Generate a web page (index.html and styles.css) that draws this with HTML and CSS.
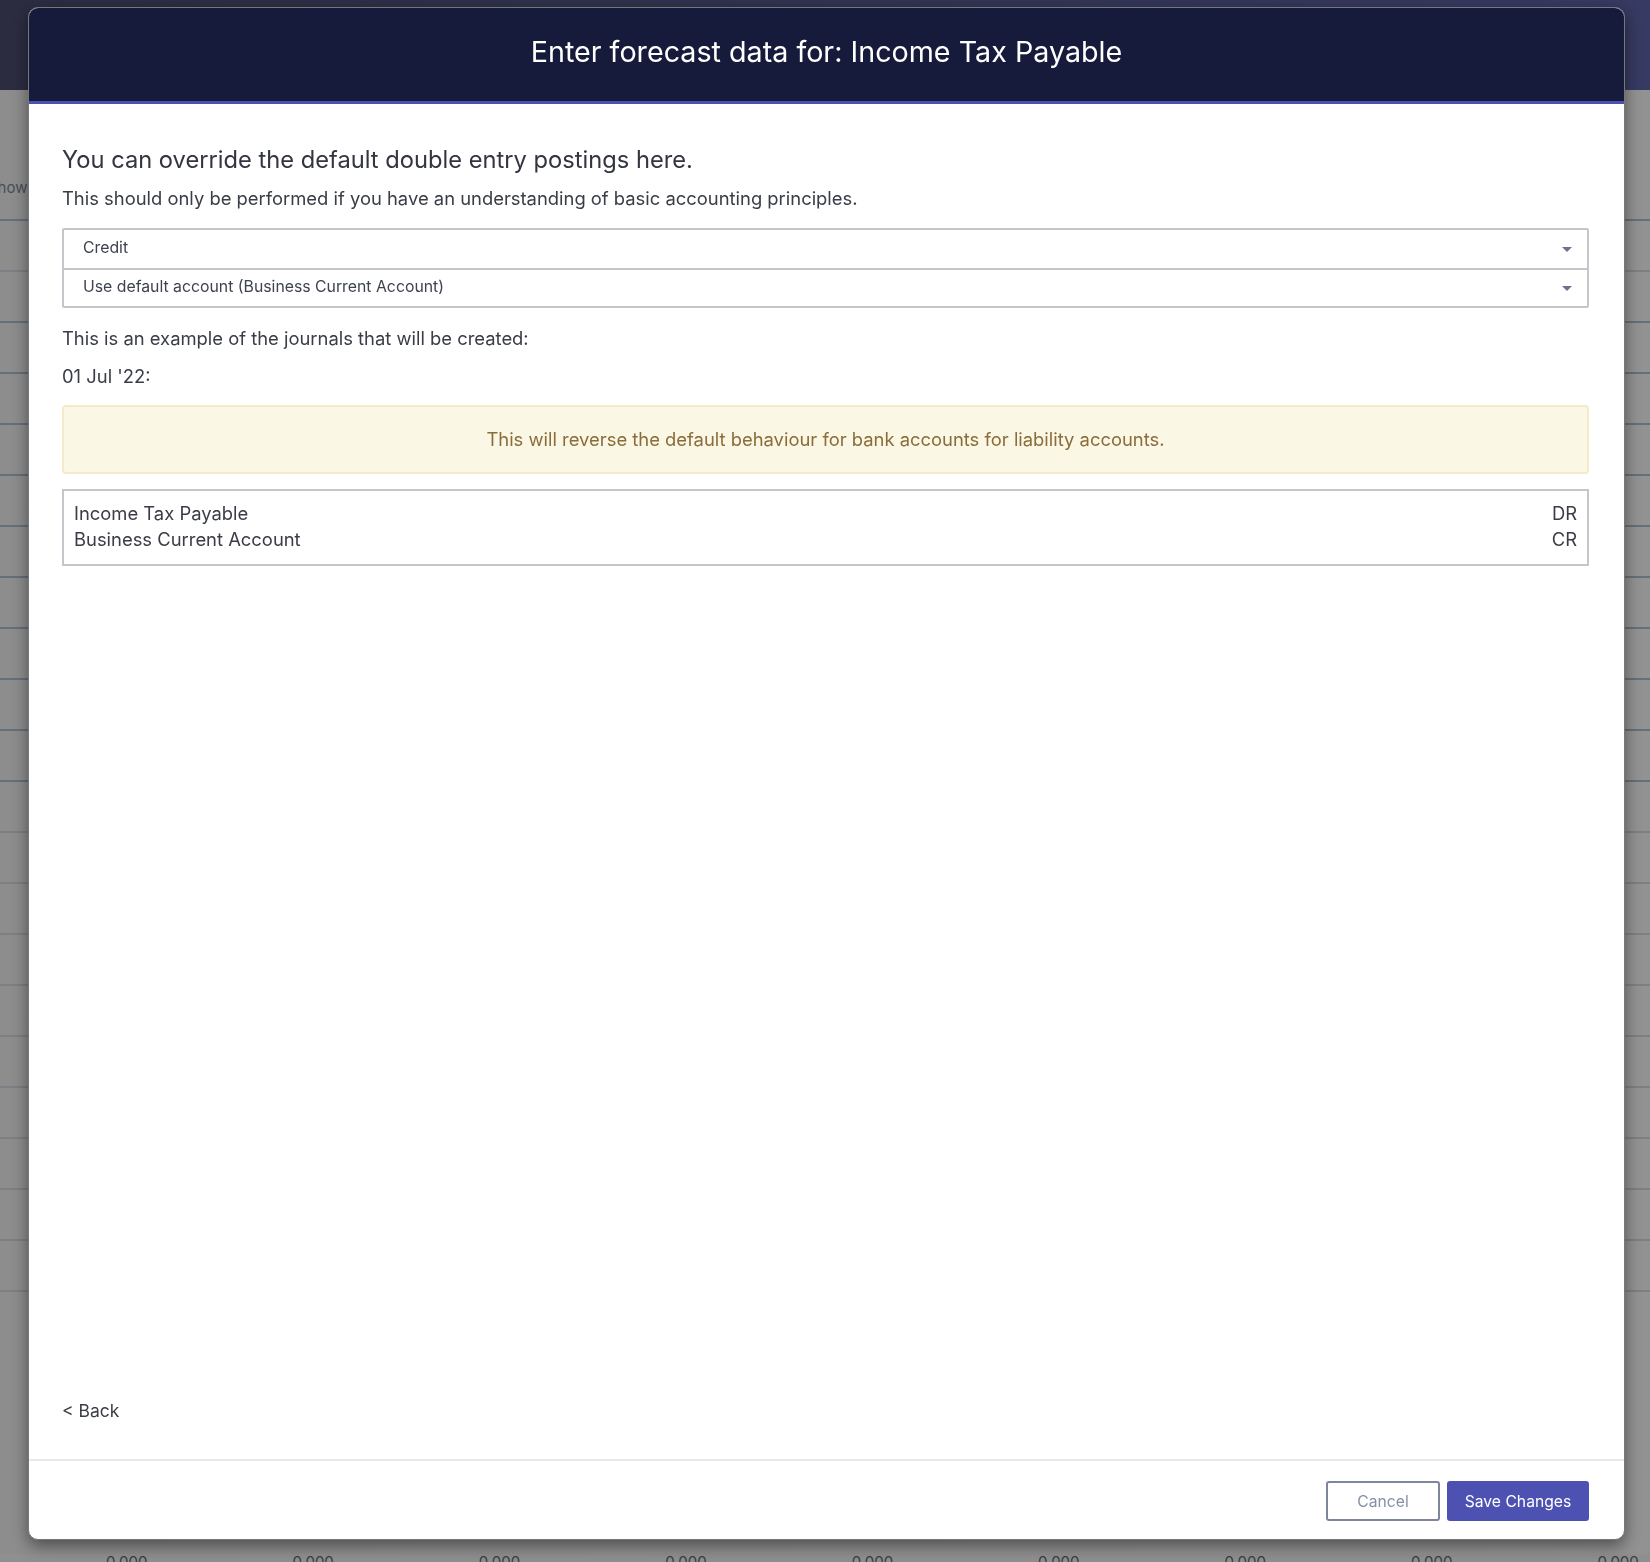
FILE: index.html
```html
<!DOCTYPE html>
<html lang="en">
<head>
  <meta charset="UTF-8">
  <meta name="viewport" content="width=device-width, initial-scale=1.0">
  <title>Enter forecast data</title>
  <link rel="stylesheet" href="styles.css">
</head>
<body>
  <!-- page behind the modal, dimmed -->
  <div class="page">
    <div class="topbar"></div>
    <div class="grid">
      <div class="grid-row tall"><span class="row-label">Show</span></div>
      <div class="grid-row light"></div>
      <div class="grid-row"></div>
      <div class="grid-row"></div>
      <div class="grid-row"></div>
      <div class="grid-row"></div>
      <div class="grid-row"></div>
      <div class="grid-row"></div>
      <div class="grid-row"></div>
      <div class="grid-row"></div>
      <div class="grid-row"></div>
      <div class="grid-row"></div>
      <div class="grid-row light"></div>
      <div class="grid-row light"></div>
      <div class="grid-row light"></div>
      <div class="grid-row light"></div>
      <div class="grid-row light"></div>
      <div class="grid-row light"></div>
      <div class="grid-row light"></div>
      <div class="grid-row light"></div>
      <div class="grid-row light"></div>
      <div class="grid-row light"></div>
    </div>
    <div class="totals">
      <span>0,000</span><span>0,000</span><span>0,000</span>
      <span>0,000</span><span>0,000</span><span>0,000</span>
      <span>0,000</span><span>0,000</span><span>0,000</span>
    </div>
  </div>

  <div class="modal">
    <div class="modal-header">Enter forecast data for: Income Tax Payable</div>

    <div class="modal-body">
      <h2 class="lead">You can override the default double entry postings here.</h2>
      <p class="note">This should only be performed if you have an understanding of basic accounting principles.</p>

      <div class="select-group">
        <div class="select">
          <span>Credit</span>
          <i class="caret"></i>
        </div>
        <div class="select">
          <span>Use default account (Business Current Account)</span>
          <i class="caret"></i>
        </div>
      </div>

      <p class="text">This is an example of the journals that will be created:</p>
      <p class="text date">01 Jul '22:</p>

      <div class="alert">This will reverse the default behaviour for bank accounts for liability accounts.</div>

      <div class="journal">
        <div class="journal-row"><span>Income Tax Payable</span><span>DR</span></div>
        <div class="journal-row"><span>Business Current Account</span><span>CR</span></div>
      </div>

      <a class="back" href="#">&lt; Back</a>
    </div>

    <div class="modal-footer">
      <button class="btn btn-cancel">Cancel</button>
      <button class="btn btn-save">Save Changes</button>
    </div>
  </div>
</body>
</html>
```

FILE: styles.css
```css
* {
  box-sizing: border-box;
}

body {
  margin: 0;
  height: 100vh;
  overflow: hidden;
  font-family: Inter, "Noto Sans", sans-serif;
  background: #8f8f8f;
}

/* Dimmed page behind */
.page {
  height: 100vh;
  display: flex;
  flex-direction: column;
}

.topbar {
  height: 90px;
  flex-shrink: 0;
  background: linear-gradient(90deg, #2b2c40, #373a62);
}

.grid {
  flex: 1;
  overflow: hidden;
  background: linear-gradient(90deg, #8d8d8d, #929292);
}

.grid-row {
  height: 51px;
  border-bottom: 2px solid #66707a;
  display: flex;
  align-items: center;
}

.grid-row.tall {
  height: 131px;
  align-items: flex-start;
  padding-top: 88px;
}

.grid-row.light {
  border-bottom-color: #7c8084;
}

.row-label {
  font-size: 15px;
  color: #4a4d55;
  margin-left: -12px;
}

.totals {
  height: 8px;
  overflow: hidden;
  display: flex;
  gap: 145px;
  padding-left: 106px;
  font-size: 15px;
  line-height: 15px;
  color: #3a3d44;
}

/* Modal */
.modal {
  position: fixed;
  top: 7px;
  left: 28px;
  width: 1597px;
  height: 1533px;
  display: flex;
  flex-direction: column;
  background: #fff;
  border: 1px solid #747878;
  border-radius: 10px;
  box-shadow: 0 6px 16px rgba(0, 0, 0, 0.45);
  overflow: hidden;
}

.modal-header {
  height: 96px;
  flex-shrink: 0;
  background: #161a3b;
  border-bottom: 3px solid #4b51b3;
  color: #fff;
  font-size: 28.7px;
  display: flex;
  align-items: center;
  justify-content: center;
  padding-bottom: 6px;
}

.modal-body {
  flex: 1;
  display: flex;
  flex-direction: column;
  padding: 41px 35px 0 33px;
  color: #3a3d46;
}

.lead {
  margin: 0;
  font-size: 23.7px;
  font-weight: 400;
  line-height: 30px;
  color: #33363f;
}

.note {
  margin: 11px 0 0;
  font-size: 18.4px;
  line-height: 24px;
}

.select-group {
  margin-top: 18px;
  border: 2px solid #c3c7cc;
  border-radius: 2px;
}

.select {
  height: 38px;
  display: flex;
  align-items: center;
  justify-content: space-between;
  padding: 0 15px 3px 19px;
  font-size: 15.8px;
  color: #3e4350;
}

.select + .select {
  border-top: 2px solid #c3c7cc;
}

.caret {
  width: 0;
  height: 0;
  border-left: 5px solid transparent;
  border-right: 5px solid transparent;
  border-top: 5px solid #6c7290;
  margin-top: 4px;
}

.text {
  margin: 18px 0 0;
  font-size: 18.4px;
  line-height: 24px;
}

.text.date {
  margin-top: 14px;
}

.alert {
  margin-top: 17px;
  height: 69px;
  display: flex;
  align-items: center;
  justify-content: center;
  padding-bottom: 2px;
  background: #fbf7e5;
  border: 2px solid #f5eac7;
  border-radius: 4px;
  color: #8a6d3b;
  font-size: 18.4px;
}

.journal {
  margin-top: 15px;
  border: 2px solid #c3c7cc;
  padding: 9px 10px 12px 10px;
}

.journal-row {
  display: flex;
  justify-content: space-between;
  font-size: 18.4px;
  line-height: 26px;
  color: #3a3d46;
}

.back {
  margin-top: auto;
  margin-bottom: 38px;
  font-size: 17.5px;
  color: #3a3d46;
  text-decoration: none;
}

.modal-footer {
  height: 80px;
  flex-shrink: 0;
  border-top: 2px solid #e8e8e8;
  display: flex;
  justify-content: flex-end;
  align-items: center;
  gap: 7px;
  padding: 2px 35px 0 0;
}

.btn {
  height: 40px;
  font-family: inherit;
  font-size: 15.7px;
  border-radius: 3px;
  cursor: pointer;
}

.btn-cancel {
  width: 114px;
  background: #fff;
  border: 2px solid #7d869b;
  color: #878fa4;
}

.btn-save {
  width: 142px;
  background: #4d52b2;
  border: none;
  color: #fff;
}
```
